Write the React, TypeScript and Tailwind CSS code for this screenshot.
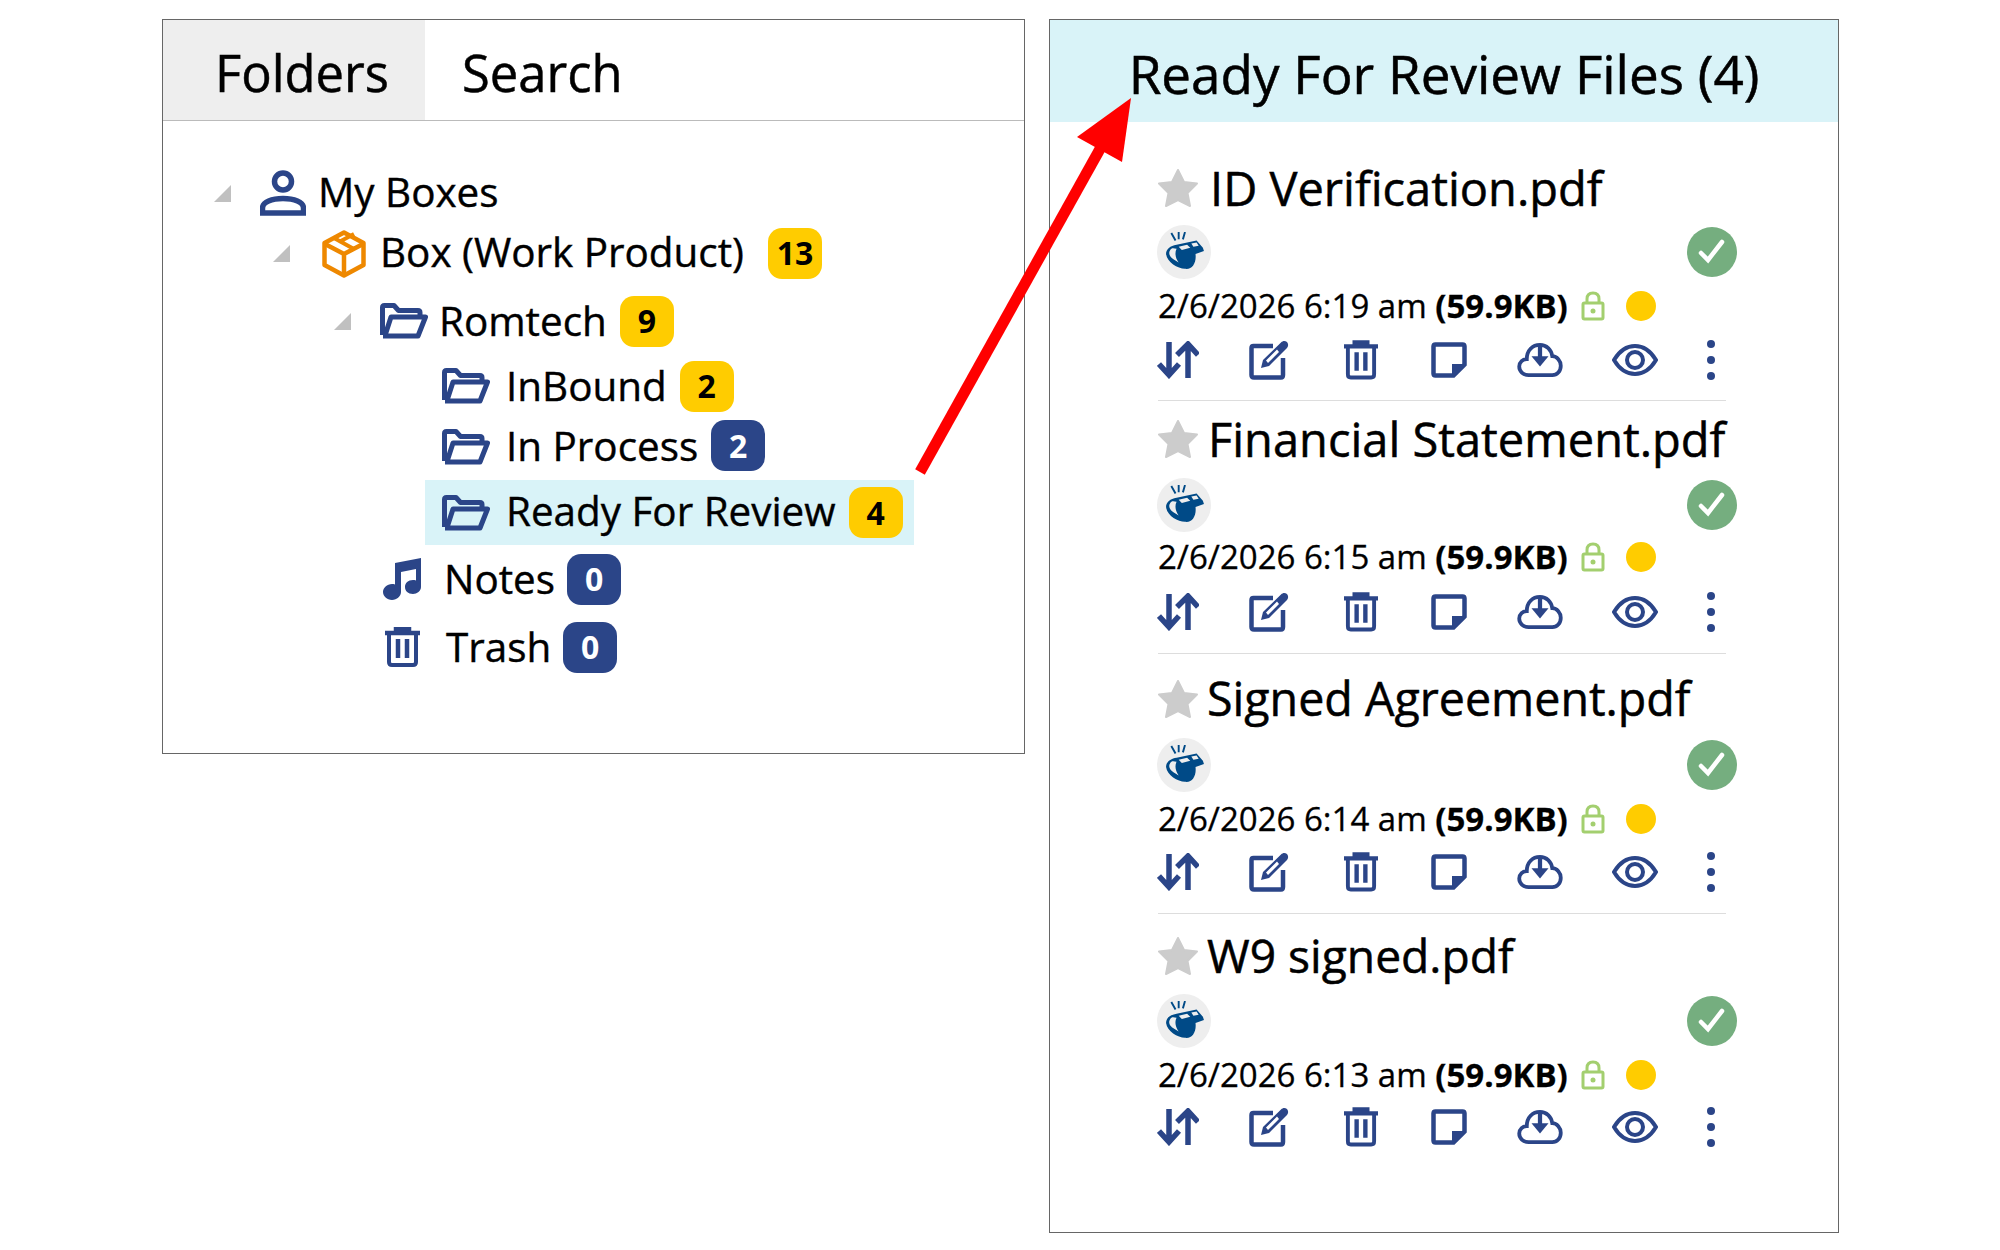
const NAVY = "#2b4588";

const Tri = () => (
  <svg width="17" height="17" viewBox="0 0 17 17" className="shrink-0">
    <path d="M17 0V17H0Z" fill="#c0c0c0" />
  </svg>
);

const PersonIcon = () => (
  <svg width="46" height="46" viewBox="0 0 46 46" fill="none" stroke={NAVY} strokeWidth="5.500" className="shrink-0">
    <circle cx="23" cy="11.500" r="8.500" />
    <path d="M2.500 43V38C2.500 32 12 28.500 23 28.500S43.500 32 43.500 38V43Z" />
  </svg>
);

const BoxIcon = () => (
  <svg width="44" height="48" viewBox="0 0 44 48" fill="none" stroke="#ee8800" strokeWidth="4.500" strokeLinejoin="round" className="shrink-0">
    <path d="M22 2.500 41.500 13V35L22 45.500 2.500 35V13Z" />
    <path d="M3 14 22 24 41 14M22 24V45" />
    <path d="M12 8 31 18.500M17 12 32 4" strokeWidth="4" />
  </svg>
);

const FolderIcon = () => (
  <svg width="48" height="36" viewBox="0 0 48 36" fill="none" stroke={NAVY} strokeLinejoin="round" className="shrink-0">
    <path d="M2.500 32V4.500C2.500 3 3 2.500 4.500 2.500H14L18.500 7.500H38C39 7.500 40 8 40 9.500V12" strokeWidth="5" />
    <path d="M3 33H38L45.500 14H11L5.500 31" strokeWidth="5" />
  </svg>
);

const NoteIcon = () => (
  <svg width="40" height="42" viewBox="0 0 40 42" fill={NAVY} className="shrink-0">
    <path d="M13 5 39 0V29C39 33 35 36 31 36 26 36 23 33 23 29 23 25 26 22 31 22 32 22 33 22 34 22.500V11L19 14V34C19 38 15 42 10 42 5 42 1 38 1 34 1 30 5 26 10 26 11 26 12 26 13 26.500Z" />
  </svg>
);

const TrashIcon = ({ w = 35, h = 40 }: { w?: number; h?: number }) => (
  <svg width={w} height={h} viewBox="0 0 35 40" fill="none" stroke={NAVY} strokeWidth="4" className="shrink-0">
    <path d="M0 6H35M11 6V2H24V6" strokeWidth="4.500" />
    <path d="M4 6V35C4 37 5 38 7 38H28C30 38 31 37 31 35V6" />
    <path d="M13 12V31M22 12V31" strokeWidth="4.500" />
  </svg>
);

const SortIcon = () => (
  <svg width="42" height="38" viewBox="0 0 42 38" fill="none" stroke={NAVY} strokeWidth="5.500" className="shrink-0">
    <path d="M12 1V33M2 23 12 34 22 23" />
    <path d="M31 37V4M20 14 31 3 41 14" />
  </svg>
);

const EditIcon = () => (
  <svg width="40" height="40" viewBox="0 0 40 40" fill="none" stroke={NAVY} strokeWidth="4.500" className="shrink-0">
    <path d="M24 6H4.500C3 6 2.500 7 2.500 8V35C2.500 37 3 37.500 5 37.500H32C33.500 37.500 34 37 34 35V18" />
    <path d="M12 28 14 20 32 2.500C34 0.500 36 0.500 38 2 39.500 4 39.500 6 38 8L20 26ZM17 20.500 19 23 30 12 28 9.500Z" fill={NAVY} stroke="none" fillRule="evenodd" />
  </svg>
);

const NoteFileIcon = () => (
  <svg width="36" height="36" viewBox="0 0 36 36" fill="none" className="shrink-0">
    <path d="M2.500 4.500C2.500 3 3 2.500 4.500 2.500H31.500C33 2.500 33.500 3 33.500 4.500V22.500L22.500 33.500H4.500C3 33.500 2.500 33 2.500 31.500Z" stroke={NAVY} strokeWidth="4.500" />
    <path d="M21 22H34V24L24 34H21Z" fill={NAVY} />
  </svg>
);

const CloudIcon = () => (
  <svg width="46" height="34" viewBox="0 0 48 36" fill="none" stroke={NAVY} strokeWidth="4" className="shrink-0">
    <path d="M12 34C6 34 2 30 2 25 2 20 6 17 10 17 10 8 16 2 24 2 31 2 36 7 37 14 42 14 46 19 46 24 46 30 42 34 37 34Z" />
    <path d="M24 2V20" strokeWidth="4.500" />
    <path d="M15 14 24 25 33 14Z" fill={NAVY} stroke="none" />
  </svg>
);

const EyeIcon = () => (
  <svg width="46" height="32" viewBox="0 0 46 32" fill="none" stroke={NAVY} strokeWidth="4" className="shrink-0">
    <path d="M2 16C8 6 15 2 23 2S38 6 44 16C38 26 31 30 23 30S8 26 2 16Z" />
    <circle cx="23" cy="16" r="8" />
  </svg>
);

const DotsIcon = () => (
  <svg width="8" height="40" viewBox="0 0 8 40" fill={NAVY} className="shrink-0">
    <circle cx="4" cy="4" r="4" />
    <circle cx="4" cy="20" r="4" />
    <circle cx="4" cy="36" r="4" />
  </svg>
);

const StarIcon = () => (
  <svg width="40" height="38" viewBox="0 0 40 38" fill="#cccccc" className="shrink-0">
    <path d="M20 1 26 13 39 14.500 29.500 24 32 37 20 31 8 37 10.500 24 1 14.500 14 13Z" stroke="#cccccc" strokeWidth="2" strokeLinejoin="round" />
  </svg>
);

const WhistleBadge = () => (
  <div className="w-[54px] h-[54px] rounded-full bg-[#eeeeee] flex items-center justify-center shrink-0">
    <svg width="40" height="40" viewBox="0 0 38 38" className="ml-[1px]">
      <path d="M6 1 10 8M13 0V7M19 0 17 7" stroke="#004a87" strokeWidth="1.800" fill="none" />
      <path d="M11 12 30 8 36 15 37 18 29 21C30 29 26 36 19 35 12 35 2 29 1 21 1 16 5 13 11 12Z" fill="#004a87" />
      <path d="M13 14 21 12 24 15 16 17ZM25 11 30 10 32 13 27 14Z" fill="#eeeeee" />
      <path d="M5 17C3 20 4 23 8 26L13 29C10 25 9 20 11 16 8 15 6 15 5 17Z" fill="#eeeeee" />
    </svg>
  </div>
);

const LockIcon = () => (
  <svg width="24" height="30" viewBox="0 0 24 30" fill="none" stroke="#a3cf6f" strokeWidth="3" className="shrink-0">
    <path d="M6 12V8C6 4 8.500 2 12 2S18 4 18 8V12" />
    <rect x="2" y="12" width="20" height="16" rx="1.500" />
    <circle cx="12" cy="20" r="2.500" fill="#a3cf6f" stroke="none" />
  </svg>
);

const CheckBadge = () => (
  <div className="w-[50px] h-[50px] rounded-full bg-[#75ae7f] flex items-center justify-center shrink-0">
    <svg width="28" height="26" viewBox="0 0 28 26" fill="none" stroke="#ffffff" strokeWidth="4.500" strokeLinecap="round">
      <path d="M3 14 10 21 24 3" />
    </svg>
  </div>
);

const Badge = ({ n, blue, cls }: { n: string; blue?: boolean; cls: string }) => (
  <span
    className={`h-[51px] w-[54px] rounded-[14px] flex items-center justify-center text-[32px] font-bold shrink-0 [-webkit-text-stroke:0px] ${cls} ${
      blue ? "bg-[#2b4588] text-white" : "bg-[#ffcc00] text-black"
    }`}
  >
    {n}
  </span>
);

const actionIcons = [
  { icon: <SortIcon />, cls: "" },
  { icon: <EditIcon />, cls: "ml-[51px]" },
  { icon: <TrashIcon w={34} h={40} />, cls: "ml-[52px]" },
  { icon: <NoteFileIcon />, cls: "ml-[48px]" },
  { icon: <CloudIcon />, cls: "ml-[51px]" },
  { icon: <EyeIcon />, cls: "ml-[55px]" },
  { icon: <DotsIcon />, cls: "ml-[36px]" },
];

const files = [
  { name: "ID Verification.pdf", date: "2/6/2026 6:19 am", wrap: "pt-[34px] pb-[9px]", nameCls: "ml-[12px] text-[47px]", whistle: "h-[63px]", dateH: "h-[46px]", icons: "h-[62px]", line: true },
  { name: "Financial Statement.pdf", date: "2/6/2026 6:15 am", wrap: "pt-[6px] pb-[5px]", nameCls: "ml-[10px] text-[47px]", whistle: "h-[67px]", dateH: "h-[38px]", icons: "h-[72px]", line: true },
  { name: "Signed Agreement.pdf", date: "2/6/2026 6:14 am", wrap: "pt-[13px] pb-[9px]", nameCls: "ml-[9px] text-[46.6px]", whistle: "h-[67px]", dateH: "h-[42px]", icons: "h-[64px]", line: true },
  { name: "W9 signed.pdf", date: "2/6/2026 6:13 am", wrap: "pt-[10px]", nameCls: "ml-[9px] text-[46.2px]", whistle: "h-[65px]", dateH: "h-[44px]", icons: "h-[60px]", line: false },
];

const FileItem = ({ f }: { f: (typeof files)[number] }) => (
  <div>
    <div className={f.wrap}>
      <div className="flex items-center h-[64px]">
        <StarIcon />
        <span className={`[-webkit-text-stroke:0.5px_#000] text-black whitespace-nowrap ${f.nameCls}`}>{f.name}</span>
      </div>
      <div className={`flex items-center justify-between w-[580px] -ml-[1px] ${f.whistle}`}>
        <WhistleBadge />
        <CheckBadge />
      </div>
      <div className={`flex items-center text-[33px] text-black whitespace-nowrap ${f.dateH}`}>
        <span className="[-webkit-text-stroke:0.3px_#000]">
          {f.date} <b className="font-bold">(59.9KB)</b>
        </span>
        <span className="ml-[13px]">
          <LockIcon />
        </span>
        <span className="ml-[21px] w-[30px] h-[30px] rounded-full bg-[#ffcc00]" />
      </div>
      <div className={`flex items-center ${f.icons}`}>
        {actionIcons.map((a, i) => (
          <div key={i} className={`w-[40px] flex justify-center ${a.cls}`}>
            {a.icon}
          </div>
        ))}
      </div>
    </div>
    {f.line && <div className="w-[568px] h-[1px] bg-[#dddddd]" />}
  </div>
);

export default function App() {
  return (
    <div
      className="relative w-[2000px] h-[1250px] bg-white flex items-start pl-[162px] pt-[19px] gap-[24px] overflow-hidden"
      style={{ fontFamily: '"Open Sans", sans-serif' }}
    >
      {/* folders panel */}
      <div className="w-[863px] h-[735px] border border-[#666666] shrink-0">
        <div className="flex h-[101px] border-b border-[#bbbbbb] text-[50.7px] [-webkit-text-stroke:0.5px_#000] text-black">
          <div className="w-[262px] bg-[#eeeeee] flex items-center pl-[52px] pt-[6px]">Folders</div>
          <div className="flex items-center pl-[37px] pt-[6px]">Search</div>
        </div>
        <div className="pt-[42px] text-[40.4px] [-webkit-text-stroke:0.4px_#000] text-black whitespace-nowrap">
          <div className="flex items-center h-[60px] pl-[51px]">
            <Tri />
            <span className="ml-[29px]"><PersonIcon /></span>
            <span className="ml-[12px] pb-[2px]">My Boxes</span>
          </div>
          <div className="flex items-center h-[61px] pl-[110px]">
            <Tri />
            <span className="ml-[32px]"><BoxIcon /></span>
            <span className="ml-[14px] pb-[2px]">Box (Work Product)</span>
            <Badge n="13" cls="ml-[24px] -mt-[1px]" />
          </div>
          <div className="flex items-center h-[74px] pl-[171px]">
            <Tri />
            <span className="ml-[29px]"><FolderIcon /></span>
            <span className="ml-[11px]">Romtech</span>
            <Badge n="9" cls="ml-[13px]" />
          </div>
          <div className="flex items-center h-[56px] pl-[279px]">
            <FolderIcon />
            <span className="ml-[16px]">InBound</span>
            <Badge n="2" cls="ml-[13px]" />
          </div>
          <div className="flex items-center h-[66px] pl-[279px]">
            <FolderIcon />
            <span className="ml-[16px] pb-[2px]">In Process</span>
            <Badge n="2" blue cls="ml-[13px] -mt-[3px]" />
          </div>
          <div className="flex items-center h-[65px] ml-[262px] w-[489px] pl-[17px] bg-[#d9f3f8]">
            <FolderIcon />
            <span className="ml-[16px] pb-[2px]">Ready For Review</span>
            <Badge n="4" cls="ml-[13px]" />
          </div>
          <div className="flex items-center h-[68px] pl-[219px]">
            <NoteIcon />
            <span className="ml-[22px]">Notes</span>
            <Badge n="0" blue cls="ml-[12px]" />
          </div>
          <div className="flex items-center h-[68px] pl-[222px]">
            <TrashIcon />
            <span className="ml-[26px]">Trash</span>
            <Badge n="0" blue cls="ml-[12px]" />
          </div>
        </div>
      </div>

      {/* files panel */}
      <div className="w-[790px] h-[1214px] border border-[#666666] shrink-0">
        <div className="h-[102px] bg-[#d9f3f8] flex items-center justify-center text-[53px] [-webkit-text-stroke:0.5px_#000] text-black whitespace-nowrap pt-[6px]">
          Ready For Review Files (4)
        </div>
        <div className="pl-[108px]">
          {files.map((f) => (
            <FileItem key={f.name} f={f} />
          ))}
        </div>
      </div>

      {/* arrow between panels */}
      <svg className="absolute left-0 top-0 pointer-events-none" width="2000" height="1250" viewBox="0 0 2000 1250">
        <path d="M920 472 1105 140" stroke="#ff0000" strokeWidth="11" fill="none" />
        <path d="M1131 98 1077 137 1122 162Z" fill="#ff0000" />
      </svg>
    </div>
  );
}
